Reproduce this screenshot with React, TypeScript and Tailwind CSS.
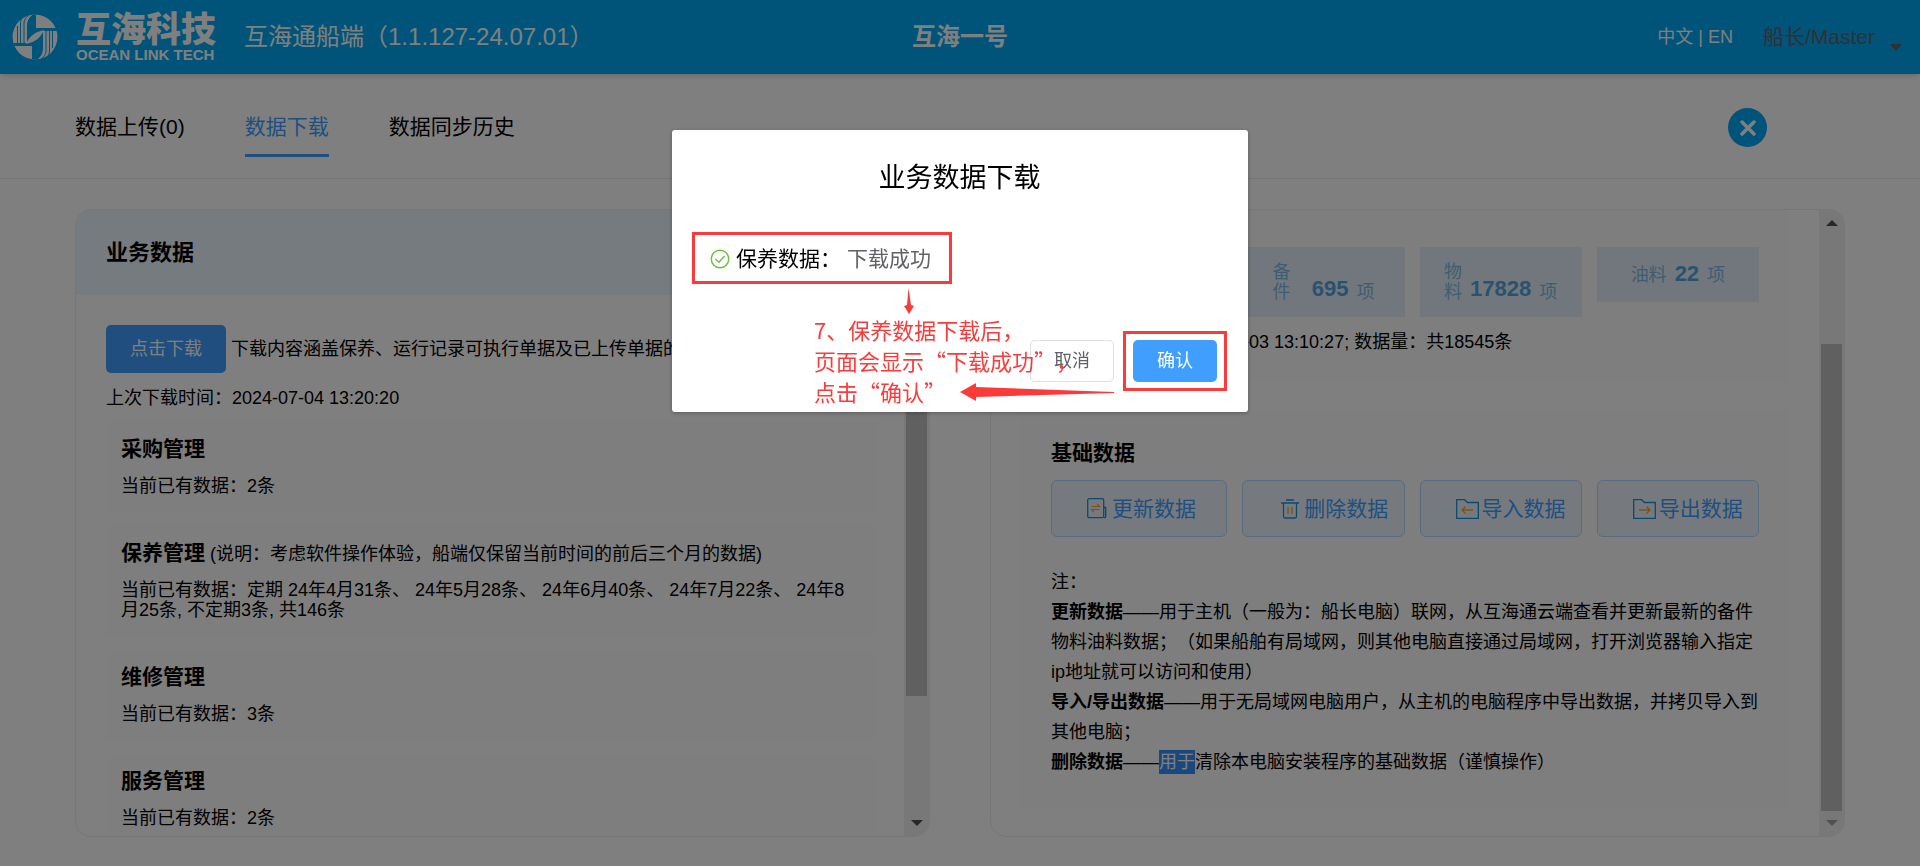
import { useState } from "react";
import clsx from "clsx";

const tabs = ["数据上传(0)", "数据下载", "数据同步历史"];

const modules = [
  { title: "采购管理", note: "", text: "当前已有数据：2条" },
  {
    title: "保养管理",
    note: "(说明：考虑软件操作体验，船端仅保留当前时间的前后三个月的数据)",
    text: "当前已有数据：定期 24年4月31条、 24年5月28条、 24年6月40条、 24年7月22条、 24年8月25条, 不定期3条, 共146条",
  },
  { title: "维修管理", note: "", text: "当前已有数据：3条" },
  { title: "服务管理", note: "", text: "当前已有数据：2条" },
];

function Logo() {
  return (
    <svg viewBox="0 0 46 46" className="h-[46px] w-[46px] shrink-0">
      <defs>
        <clipPath id="logo-circle">
          <circle cx="23" cy="23" r="22.5" />
        </clipPath>
      </defs>
      <g clipPath="url(#logo-circle)">
        <circle cx="23" cy="23" r="23" fill="#fff" />
        <path d="M24 0V14H46V17H36C30 17 27 17 23 19L15 29V31H22V46L20 46V32H0V29H15V12C15 6 18 2 22 0Z" fill="#00a9f4" />
        <path d="M24 14H46V17H31V34C31 40 28 44 24 46H22V32H15V28L17 24L24 18Z" fill="#00a9f4" />
        <path d="M14 30C17 23 22 18 32 16C29 23 24 28 14 30Z" fill="#fff" />
        <path d="M5.500 31V12M8.500 31V9C8.500 6 10 4 12 2M12 31V9C12 6 14 3 17 1" stroke="#00a9f4" strokeWidth="1" fill="none" />
        <path d="M40.500 15V34M37.500 15V37C37.500 40 36 42 34 44M34 15V37C34 40 32 43 29 45" stroke="#00a9f4" strokeWidth="1" fill="none" />
      </g>
    </svg>
  );
}

function ScrollBar({ thumb, atEnd }: { thumb: string; atEnd?: boolean }) {
  return (
    <div className="flex w-[25px] shrink-0 flex-col items-center bg-[#f1f1f1]">
      <svg viewBox="0 0 12 6" className="mt-[10px] h-[6px] w-[12px] shrink-0">
        <path d="M0 6L6 0L12 6Z" fill="#505050" />
      </svg>
      <div className="my-[9px] flex min-h-0 w-[21px] flex-1 flex-col">
        <div className={clsx("w-full bg-[#c1c1c1]", thumb)} />
      </div>
      <svg viewBox="0 0 12 6" className="mb-[10px] h-[6px] w-[12px] shrink-0">
        <path d="M0 0L6 6L12 0Z" fill={atEnd ? "#a3a3a3" : "#505050"} />
      </svg>
    </div>
  );
}

function Stat({ label, value, narrow }: { label: string; value: string; narrow?: boolean }) {
  return (
    <div className="flex items-end justify-center bg-[#e2eff8] py-[15px] text-[18px] leading-[20px] text-[#7fbbe4]">
      <span className={narrow ? "w-[18px]" : "leading-[23px]"}>{label}</span>
      <b className={clsx("mr-2 pb-[2px] pl-2 text-right text-[22px] leading-[23px] text-[#55a5df]", narrow && "min-w-[58px]")}>
        {value}
      </b>
      <span className={narrow ? "" : "leading-[23px]"}>项</span>
    </div>
  );
}

function UpdateIcon() {
  return (
    <svg viewBox="0 0 20 21" className="h-[21px] w-[20px]" fill="none">
      <rect x="0.700" y="0.700" width="16" height="19" rx="1.500" stroke="#1296db" strokeWidth="1.300" />
      <path d="M17 9.500H18.700V18.500Q18.700 19.700 17 19.700" stroke="#1296db" strokeWidth="1.300" />
      <path d="M4.500 8.500H12.500L10 6M12.500 11.500H4.500L7 14" stroke="#f5a623" strokeWidth="1.200" />
    </svg>
  );
}

function DeleteIcon() {
  return (
    <svg viewBox="0 0 18 20" className="h-[20px] w-[18px]" fill="none">
      <path d="M5 1H13M0 4H18M2.500 4V17.500Q2.500 19 4 19H14Q15.500 19 15.500 17.500V4" stroke="#1296db" strokeWidth="1.300" />
      <path d="M7 8V15M11 8V15" stroke="#f5a623" strokeWidth="1.300" />
    </svg>
  );
}

function FolderIcon({ out }: { out?: boolean }) {
  return (
    <svg viewBox="0 0 23 20" className="h-[20px] w-[23px]" fill="none">
      <path d="M0.700 0.700H8.500L11.500 3.500H22.300V19.300H0.700Z" stroke="#1296db" strokeWidth="1.300" />
      <path
        d={out ? "M6 11H17M13.500 7.500L17 11L13.500 14.500" : "M17 11H6M9.500 7.500L6 11L9.500 14.500"}
        stroke="#f5a623"
        strokeWidth="1.300"
      />
    </svg>
  );
}

const actions = [
  { label: "更新数据", icon: <UpdateIcon />, spacing: "gap-[5px] pl-[35px]" },
  { label: "删除数据", icon: <DeleteIcon />, spacing: "gap-[5px] pl-[38px]" },
  { label: "导入数据", icon: <FolderIcon />, spacing: "gap-[3px] pl-[35px]" },
  { label: "导出数据", icon: <FolderIcon out />, spacing: "gap-[3px] pl-[35px]" },
];

export default function App() {
  const [activeTab, setActiveTab] = useState(1);

  return (
    <div className="flex h-screen flex-col overflow-hidden bg-white font-['Liberation_Sans','Noto_Sans_CJK_SC',sans-serif] text-[18px] text-black [text-spacing-trim:space-all]">
      <header className="flex h-[74px] shrink-0 items-center bg-[#00a9f4] px-3 text-white shadow-md">
        <div className="flex flex-1 items-center">
          <Logo />
          <div className="ml-[18px] flex flex-col">
            <span className="text-[35px] leading-[35px] font-black">互海科技</span>
            <span className="text-[15px] leading-[15px] font-bold whitespace-nowrap">OCEAN LINK TECH</span>
          </div>
          <span className="ml-7 text-[24px] whitespace-nowrap">互海通船端（1.1.127-24.07.01）</span>
        </div>
        <h1 className="text-[24px] font-bold">互海一号</h1>
        <div className="flex flex-1 items-center justify-end">
          <button type="button">中文 | EN</button>
          <button type="button" className="mr-[6px] ml-[30px] flex items-center text-[21px] text-[#606266]">
            船长/Master
            <svg viewBox="0 0 12 7" className="mt-[20px] ml-[15px] h-[7px] w-[12px]">
              <path d="M0 0H12L6 7Z" fill="#606266" />
            </svg>
          </button>
        </div>
      </header>

      <nav className="flex h-[105px] shrink-0 items-center justify-between border-b border-[#ebebeb] pt-[3px] pr-[153px] pl-[75px]">
        <div className="flex gap-[60px] text-[21px]">
          {tabs.map((tab, i) => (
            <button
              key={tab}
              type="button"
              onClick={() => setActiveTab(i)}
              className={clsx(
                "border-b-[3px] pt-[14px] pb-[12px] leading-[30px]",
                i === activeTab ? "border-[#409eff] text-[#409eff]" : "border-transparent"
              )}
            >
              {tab}
            </button>
          ))}
        </div>
        <button type="button" aria-label="关闭" className="flex h-[39px] w-[39px] items-center justify-center rounded-full bg-[#00a9f4]">
          <svg viewBox="0 0 16 16" className="h-4 w-4">
            <path d="M2 2L14 14M14 2L2 14" stroke="#fff" strokeWidth="3.500" strokeLinecap="round" />
          </svg>
        </button>
      </nav>

      <main className="grid min-h-0 flex-1 grid-cols-2 gap-[60px] px-[75px] pt-[30px] pb-[29px]">
        <section className="flex min-h-0 overflow-hidden rounded-[16px] border border-[#ebeef5]">
          <div className="min-w-0 flex-1 overflow-hidden">
            <div className="flex h-[85px] items-center bg-[#ebf7ff] px-[30px]">
              <h2 className="text-[22px] font-bold">业务数据</h2>
            </div>
            <div className="flex flex-col p-[30px]">
              <div className="flex items-center gap-[5px] whitespace-nowrap">
                <button type="button" className="h-12 w-[120px] shrink-0 rounded-[5px] bg-[#409eff] text-white">
                  点击下载
                </button>
                <span>下载内容涵盖保养、运行记录可执行单据及已上传单据的更新数据</span>
              </div>
              <p className="mt-[10px] mb-[9px] leading-[30px]">上次下载时间：2024-07-04 13:20:20</p>
              <div className="flex flex-col gap-[15px]">
                {modules.map((m) => (
                  <article key={m.title} className="bg-[#fcfcfc] p-[15px]">
                    <h3 className="mb-[15px] h-[24px] text-[21px] leading-[24px] font-bold">
                      {m.title}
                      {m.note && <span className="ml-[5px] text-[18px] font-normal">{m.note}</span>}
                    </h3>
                    <p className="leading-[20px]">{m.text}</p>
                  </article>
                ))}
              </div>
            </div>
          </div>
          <ScrollBar thumb="h-4/5" />
        </section>

        <section className="flex min-h-0 overflow-hidden rounded-[16px] border border-[#ebeef5]">
          <div className="min-w-0 flex-1 overflow-hidden px-[30px]">
            <article className="mb-[30px] h-[171px] bg-[#fcfcfc] px-[30px] pt-[37px]">
              <div className="grid grid-cols-[176fr_162fr_162fr_162fr] items-start gap-[15px]">
                <div className="h-[70px] bg-[#e2eff8]" />
                <Stat label="备件" value="695" narrow />
                <Stat label="物料" value="17828" narrow />
                <Stat label="油料" value="22" />
              </div>
              <p className="mt-[10px] leading-[30px]">上次更新时间：2024-07-03 13:10:27; 数据量：共18545条</p>
            </article>
            <article className="bg-[#fcfcfc] p-[30px]">
              <h2 className="text-[21px] leading-[24px] font-bold">基础数据</h2>
              <div className="mt-[15px] grid grid-cols-[176fr_162fr_162fr_162fr] gap-[15px]">
                {actions.map((a) => (
                  <button
                    key={a.label}
                    type="button"
                    className={clsx(
                      "flex h-[57px] items-center rounded-[6px] border border-[#b3d8ff] bg-[#ecf5ff] text-[21px] whitespace-nowrap text-[#409eff]",
                      a.spacing
                    )}
                  >
                    {a.icon}
                    {a.label}
                  </button>
                ))}
              </div>
              <div className="mt-[30px] leading-[30px]">
                <p>注：</p>
                <p>
                  <b>更新数据</b>——用于主机（一般为：船长电脑）联网，从互海通云端查看并更新最新的备件物料油料数据；（如果船舶有局域网，则其他电脑直接通过局域网，打开浏览器输入指定ip地址就可以访问和使用）
                </p>
                <p>
                  <b>导入/导出数据</b>——用于无局域网电脑用户，从主机的电脑程序中导出数据，并拷贝导入到其他电脑；
                </p>
                <p>
                  <b>删除数据</b>——<mark className="bg-[#3390ff] py-[2px] text-white">用于</mark>清除本电脑安装程序的基础数据（谨慎操作）
                </p>
              </div>
            </article>
          </div>
          <ScrollBar thumb="mt-auto h-[81%]" atEnd />
        </section>
      </main>

      <div className="fixed inset-0 flex items-start justify-center bg-black/50 pt-[130px]">
        <div
          role="dialog"
          aria-labelledby="dialog-title"
          className="relative flex w-[30%] min-w-[576px] flex-col rounded-[3px] bg-white pt-[31px] pr-[21px] pb-[21px] pl-5 shadow-[0_1px_4px_rgba(0,0,0,0.3)]"
        >
          <h2 id="dialog-title" className="text-center text-[27px] leading-[34px]">
            业务数据下载
          </h2>
          <div className="mt-[37px] flex h-[52px] w-[260px] items-center border-[3px] border-[#fc3a3a] pt-[2px] pl-[15px] text-[21px] whitespace-nowrap">
            <svg viewBox="0 0 20 20" className="mr-[6px] h-5 w-5" fill="none" stroke="#67c23a" strokeWidth="1.400">
              <circle cx="10" cy="10" r="8.700" />
              <path d="M5.500 10L9 13.300L14.500 7" />
            </svg>
            <span>保养数据：</span>
            <span className="ml-[6px] text-[#606266]">下载成功</span>
          </div>
          <div className="mt-[47px] flex items-center justify-end gap-[9px]">
            <button type="button" className="h-[42px] w-[84px] rounded-[5px] border border-[#dcdfe6] text-[#606266]">
              取消
            </button>
            <div className="border-[3px] border-[#fc3a3a] px-[7px] py-[6px]">
              <button type="button" className="block h-[42px] w-[84px] rounded-[5px] bg-[#409eff] text-white">
                确认
              </button>
            </div>
          </div>

          {/* step annotation drawn over the dialog */}
          <div className="pointer-events-none absolute top-[158px] left-[142px] text-[22px] leading-[31px] whitespace-nowrap text-[#fc3a3a]">
            <svg viewBox="0 0 10 29" className="ml-[90px] h-[26px] w-[10px]" preserveAspectRatio="none">
              <path d="M4.500 0L7 19L10 20L5 29L0 20L3 19Z" fill="#fc3a3a" />
            </svg>
            <p className="font-['Noto_Sans_CJK_SC',sans-serif]">7、保养数据下载后，</p>
            <p className="font-['Noto_Sans_CJK_SC',sans-serif]">页面会显示“下载成功”，</p>
            <div className="flex items-center">
              <p className="font-['Noto_Sans_CJK_SC',sans-serif]">点击“确认”</p>
              <svg viewBox="0 0 154 18" className="ml-[14px] h-[18px] w-[154px]">
                <path d="M0 9L16 0V4L154 9V10L16 14V18Z" fill="#fc3a3a" />
              </svg>
            </div>
          </div>
        </div>
      </div>
    </div>
  );
}
